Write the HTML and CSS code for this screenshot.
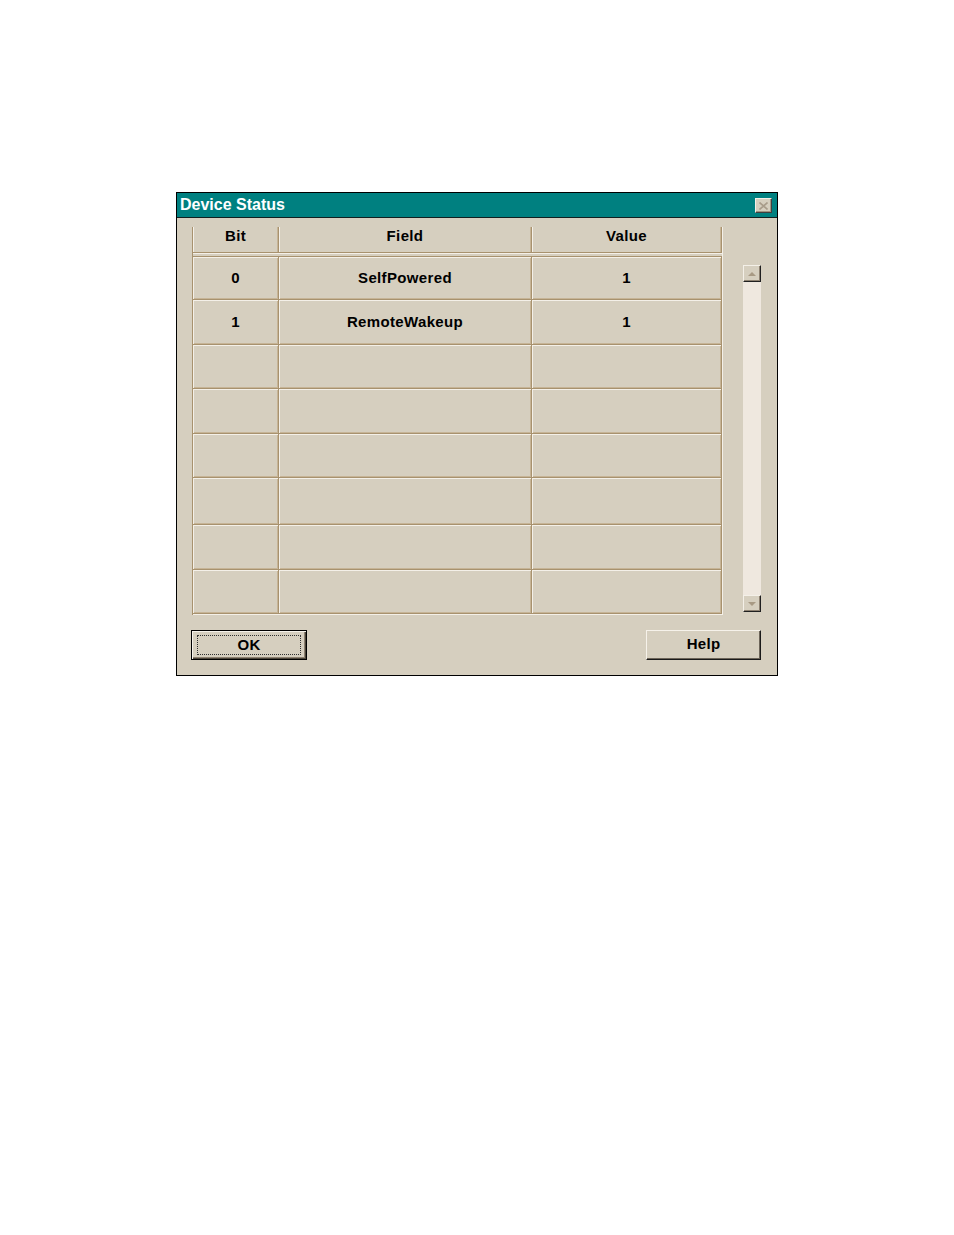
FILE: index.html
```html
<!DOCTYPE html>
<html>
<head>
<meta charset="utf-8">
<title>Device Status</title>
<link rel="stylesheet" href="styles.css">
</head>
<body>
<div class="page">
  <div class="dialog">
    <div class="titlebar">
      <span class="title">Device Status</span>
      <span class="close">
        <svg width="9" height="8" viewBox="0 0 9 8"><path d="M0.5 0.5 L8.5 7.5 M8.5 0.5 L0.5 7.5" stroke="#a89c8a" stroke-width="1.6" fill="none"/></svg>
      </span>
    </div>
    <div class="content">
      <div class="top">
        <div class="table">
          <div class="head">
            <div class="cell">Bit</div>
            <div class="cell">Field</div>
            <div class="cell">Value</div>
          </div>
          <div class="rows">
            <div class="row r1"><div class="cell">0</div><div class="cell">SelfPowered</div><div class="cell">1</div></div>
            <div class="row r2"><div class="cell">1</div><div class="cell">RemoteWakeup</div><div class="cell">1</div></div>
            <div class="row r3"><div class="cell"></div><div class="cell"></div><div class="cell"></div></div>
            <div class="row r4"><div class="cell"></div><div class="cell"></div><div class="cell"></div></div>
            <div class="row r5"><div class="cell"></div><div class="cell"></div><div class="cell"></div></div>
            <div class="row r6"><div class="cell"></div><div class="cell"></div><div class="cell"></div></div>
            <div class="row r7"><div class="cell"></div><div class="cell"></div><div class="cell"></div></div>
            <div class="row r8"><div class="cell"></div><div class="cell"></div><div class="cell"></div></div>
          </div>
        </div>
        <div class="scrollbar">
          <div class="sbtn"><span class="arrow up"></span></div>
          <div class="track"></div>
          <div class="sbtn"><span class="arrow down"></span></div>
        </div>
      </div>
      <div class="buttons">
        <div class="btn default"><span class="focus">OK</span></div>
        <div class="btn"><span class="label">Help</span></div>
      </div>
    </div>
  </div>
</div>
</body>
</html>
```

FILE: styles.css
```css
html, body {
  margin: 0;
  padding: 0;
  background: #ffffff;
}

.page {
  padding: 192px 0 0 176px;
}

.dialog {
  box-sizing: border-box;
  width: 602px;
  height: 484px;
  border: 1px solid #000000;
  background: #d6cfbf;
  display: flex;
  flex-direction: column;
  font-family: "Liberation Sans", Arial, sans-serif;
}

.titlebar {
  height: 24px;
  background: #008080;
  border-bottom: 1px solid #102020;
  display: flex;
  align-items: center;
  justify-content: space-between;
  padding: 0 5px 0 3px;
}

.title {
  color: #ffffff;
  font-weight: bold;
  font-size: 16px;
  line-height: 18px;
  margin-top: -1px;
}

.close {
  box-sizing: border-box;
  width: 17px;
  height: 15px;
  background: #d6cfbf;
  border-top: 1px solid #f4f0e8;
  border-left: 1px solid #f4f0e8;
  border-right: 1px solid #404040;
  border-bottom: 1px solid #404040;
  box-shadow: inset -1px -1px 0 #a09480;
  display: flex;
  align-items: center;
  justify-content: center;
  margin-top: 1px;
}

.close svg {
  display: block;
}

.content {
  flex: 1;
  display: flex;
  flex-direction: column;
  padding: 9px 16px 15px 15px;
}

.top {
  display: flex;
  align-items: flex-start;
}

.table {
  border-left: 1px solid #a8926e;
  border-right: 1px solid #f4f0e8;
}

.head,
.row {
  display: grid;
  grid-template-columns: 86px 253px 190px;
}

.head {
  border-bottom: 1px solid #f4f0e8;
  margin-bottom: 2px;
}

.head .cell {
  height: 26px;
  padding-bottom: 8px;
  box-shadow: inset 1px 0 0 #f4f0e8, inset -1px 0 0 #c6b496;
}

.cell {
  box-sizing: border-box;
  border-right: 1px solid #a8926e;
  border-bottom: 1px solid #a8926e;
  display: flex;
  align-items: center;
  justify-content: center;
  font-weight: bold;
  font-size: 15px;
  letter-spacing: 0.35px;
  color: #000000;
}

.rows {
  border-top: 1px solid #a8926e;
  border-bottom: 1px solid #f4f0e8;
}

.row .cell {
  height: 45px;
  box-shadow: inset 1px 1px 0 #f4f0e8, inset -1px -1px 0 #c6b496;
  padding-bottom: 2px;
}

.row.r1 .cell {
  height: 43px;
}

.row.r3 .cell,
.row.r5 .cell,
.row.r8 .cell {
  height: 44px;
}

.row.r6 .cell {
  height: 47px;
}

.scrollbar {
  margin-left: 20px;
  margin-top: 38px;
  width: 18px;
  display: flex;
  flex-direction: column;
}

.sbtn {
  box-sizing: border-box;
  width: 18px;
  height: 17px;
  background: #d6cfbf;
  border-top: 1px solid #f4f0e8;
  border-left: 1px solid #f4f0e8;
  border-right: 1px solid #202020;
  border-bottom: 1px solid #202020;
  box-shadow: inset -1px -1px 0 #8c8070;
  display: flex;
  align-items: center;
  justify-content: center;
}

.track {
  height: 313px;
  background: #efe8df;
}

.arrow {
  width: 0;
  height: 0;
  border-left: 4px solid transparent;
  border-right: 4px solid transparent;
}

.arrow.up {
  border-bottom: 4px solid #a89a84;
}

.arrow.down {
  border-top: 4px solid #a89a84;
}

.buttons {
  display: flex;
  justify-content: space-between;
  margin-top: 15px;
  margin-left: -1px;
}

.btn {
  box-sizing: border-box;
  width: 115px;
  height: 30px;
  background: #d6cfbf;
  border-top: 1px solid #f6f2ea;
  border-left: 1px solid #f6f2ea;
  border-right: 1px solid #1a1a1a;
  border-bottom: 1px solid #1a1a1a;
  box-shadow: inset -1px -1px 0 #6c6458;
  display: flex;
  align-items: center;
  justify-content: center;
  font-weight: bold;
  font-size: 15px;
  color: #000000;
  padding-bottom: 3px;
}

.btn.default {
  width: 116px;
  border: 1px solid #000000;
  box-shadow: inset 1px 1px 0 #f6f2ea, inset -1px -1px 0 #4a4438, inset -2px -2px 0 #8c8070;
  padding: 4px 5px 4px 5px;
}

.focus {
  box-sizing: border-box;
  width: 100%;
  height: 100%;
  border: 1px dotted #303030;
  display: flex;
  align-items: center;
  justify-content: center;
  font-size: 15px;
  letter-spacing: 0.3px;
  padding-bottom: 2px;
}

.label {
  letter-spacing: 0.3px;
}
```
